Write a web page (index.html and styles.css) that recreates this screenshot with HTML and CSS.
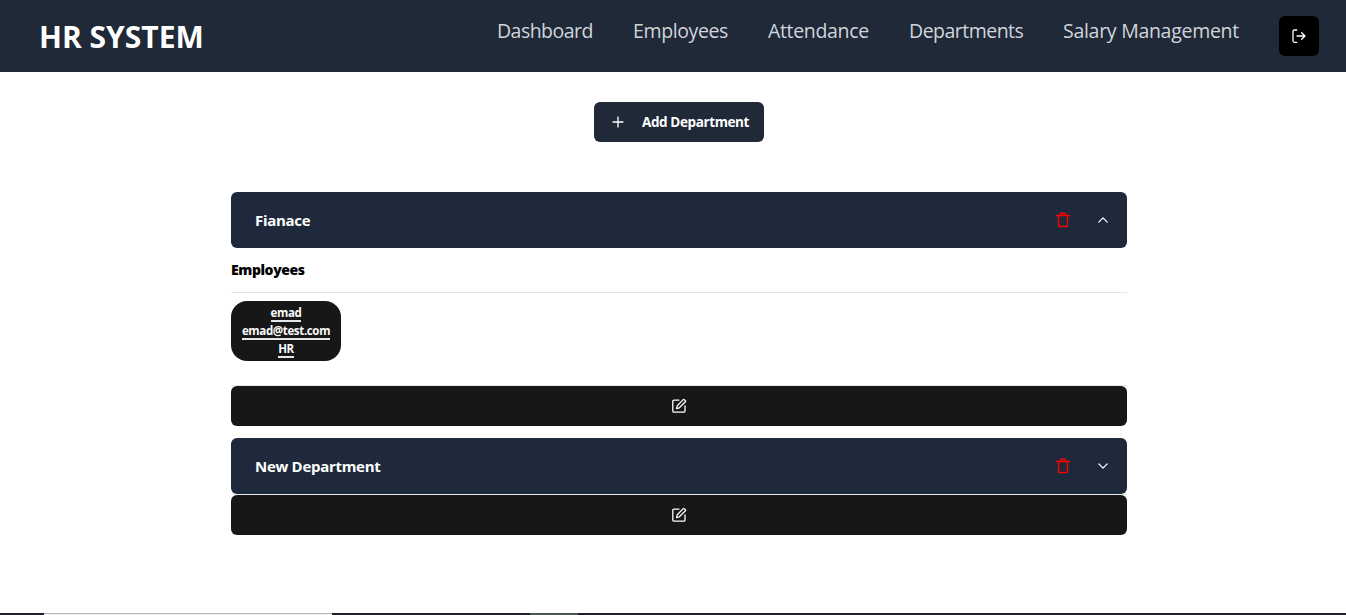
FILE: index.html
```
<!DOCTYPE html>
<html lang="en">
<head>
<meta charset="utf-8">
<title>HR System</title>
<link rel="stylesheet" href="styles.css">
</head>
<body>
<svg class="sprite" width="0" height="0">
  <symbol id="exit" viewBox="0 0 16 16"><path d="M5.7 2H3.5Q2 2 2 3.5V12.8Q2 14.3 3.5 14.3H5.7M6 8H14M10.7 4.7L14 8L10.7 11.3"/></symbol>
  <symbol id="plus" viewBox="0 0 16 16"><path d="M3 8H13M8 3V13"/></symbol>
  <symbol id="trash" viewBox="0 0 16 16"><path d="M1.5 3.5H14.5M5.5 3.5V1.9Q5.5 1.3 6.1 1.3H9.9Q10.5 1.3 10.5 1.9V3.5M3.5 3.9V13.6Q3.5 14.5 4.4 14.5H11.6Q12.5 14.5 12.5 13.6V3.9"/></symbol>
  <symbol id="chevron-down" viewBox="0 0 16 16"><path d="M3.8 5.9L8 10.1L12.2 5.9"/></symbol>
  <symbol id="chevron-up" viewBox="0 0 16 16"><path d="M3.8 10.1L8 5.9L12.2 10.1"/></symbol>
  <symbol id="edit" viewBox="0 0 16 16"><path d="M8 2.1H3.1Q1.8 2.1 1.8 3.4V12.9Q1.8 14.2 3.1 14.2H12.7Q14 14.2 14 12.9V8M12.2 1.6Q12.7 1.1 13.2 1.6L14.4 2.8Q14.9 3.3 14.4 3.8L8.3 9.8L5.5 10.6L6.3 7.8Z"/></symbol>
</svg>
<header class="navbar">
  <h1 class="brand">HR SYSTEM</h1>
  <nav class="links">
    <a class="link dashboard">Dashboard</a>
    <a class="link employees">Employees</a>
    <a class="link attendance">Attendance</a>
    <a class="link departments">Departments</a>
    <a class="link salary">Salary Management</a>
    <button class="logout" aria-label="Log out"><svg class="icon"><use href="#exit"/></svg></button>
  </nav>
</header>
<main class="content">
  <button class="add"><svg class="icon"><use href="#plus"/></svg><span class="add-label">Add Department</span></button>
  <section class="department open">
    <div class="bar"><span class="name">Fianace</span><svg class="icon trash"><use href="#trash"/></svg><svg class="icon chevron"><use href="#chevron-up"/></svg></div>
    <div class="panel">
      <h2 class="heading">Employees</h2>
      <div class="card"><span class="detail">emad</span><span class="detail">emad@test.com</span><span class="detail">HR</span></div>
    </div>
    <div class="actions"><button class="edit" aria-label="Edit"><svg class="icon"><use href="#edit"/></svg></button></div>
  </section>
  <section class="department">
    <div class="bar"><span class="name">New Department</span><svg class="icon trash"><use href="#trash"/></svg><svg class="icon chevron"><use href="#chevron-down"/></svg></div>
    <div class="actions"><button class="edit" aria-label="Edit"><svg class="icon"><use href="#edit"/></svg></button></div>
  </section>
</main>
<footer class="strip"><span class="dark start"></span><span class="light"></span><span class="dark middle"></span><span class="grey"></span><span class="dark end"></span></footer>
</body>
</html>
```
FILE: styles.css
```
* { box-sizing: border-box; }
body {
  margin: 0;
  height: 615px;
  display: flex;
  flex-direction: column;
  overflow: hidden;
  background: #fff;
  font-family: "Segoe UI", "Open Sans", "Noto Sans", sans-serif;
}
h1, h2 { margin: 0; }
button { border: 0; padding: 0; font-family: inherit; color: #fff; }
.sprite { position: absolute; }
.icon { width: 16px; height: 16px; flex: none; fill: none; stroke: #fff; stroke-width: 1.3; stroke-linecap: round; stroke-linejoin: round; }
.navbar {
  height: 72px;
  flex: none;
  display: flex;
  justify-content: space-between;
  padding: 16px 27px 16px 39px;
  background: #1f2937;
}
.brand { color: #fff; font-size: 30px; line-height: 42px; font-weight: 700; white-space: nowrap; }
.links { display: flex; gap: 40px; }
.link { color: #d1d5db; font-size: 19.5px; line-height: 30px; white-space: nowrap; }
.dashboard { width: 96px; letter-spacing: -0.53px; }
.employees { width: 95px; letter-spacing: -0.38px; }
.attendance { width: 101px; letter-spacing: -0.33px; }
.departments { width: 114px; letter-spacing: -0.52px; }
.salary { width: 176px; letter-spacing: -0.28px; }
.logout { width: 40px; height: 40px; display: flex; align-items: center; justify-content: center; border-radius: 6px; background: #000; }
.content { width: 896px; margin-left: 231px; padding-top: 30px; display: flex; flex-direction: column; flex: 1; }
.add {
  width: 170px;
  height: 40px;
  align-self: center;
  display: flex;
  align-items: center;
  gap: 16px;
  padding-left: 16px;
  margin-bottom: 50px;
  border-radius: 6px;
  background: #1f2937;
}
.add-label { font-size: 13.5px; font-weight: 700; white-space: nowrap; letter-spacing: -0.39px; }
.open { margin-bottom: 12px; }
.department { display: flex; flex-direction: column; }
.bar { height: 56px; display: flex; align-items: center; padding: 0 16px 0 24px; border-radius: 6px; background: #1e293b; }
.name { flex: 1; padding-bottom: 1px; color: #fff; font-size: 15px; font-weight: 700; line-height: 24px; letter-spacing: -0.3px; }
.trash { stroke: #f00; stroke-width: 1.4; margin-right: 24px; }
.panel { height: 137px; }
.heading { height: 45px; padding-top: 12px; border-bottom: 1px solid #e2e4e8; color: #000; font-size: 14px; line-height: 20px; font-weight: 800; letter-spacing: -0.4px; }
.card {
  width: 110px;
  height: 60px;
  margin-top: 8px;
  padding-top: 4px;
  display: flex;
  flex-direction: column;
  align-items: center;
  border-radius: 16px;
  background: #171717;
}
.detail { height: 17px; margin-bottom: 1px; border-bottom: 2px solid #e5e7eb; color: #fafafa; font-size: 11.5px; line-height: 15px; font-weight: 700; letter-spacing: -0.35px; white-space: nowrap; }
.actions { border-top: 1px solid #e5e7eb; display: flex; }
.edit { flex: 1; height: 40px; display: flex; align-items: center; justify-content: center; background: #171717; border-radius: 6px; }
.strip { height: 2px; display: flex; flex: none; }
.dark { height: 2px; background: #1c2026; }
.start { width: 44px; }
.light { width: 288px; background: #eee; border-top: 1px solid #bbb; }
.middle { width: 198px; }
.grey { width: 48px; background: #4d5655; }
.end { flex: 1; }
```
